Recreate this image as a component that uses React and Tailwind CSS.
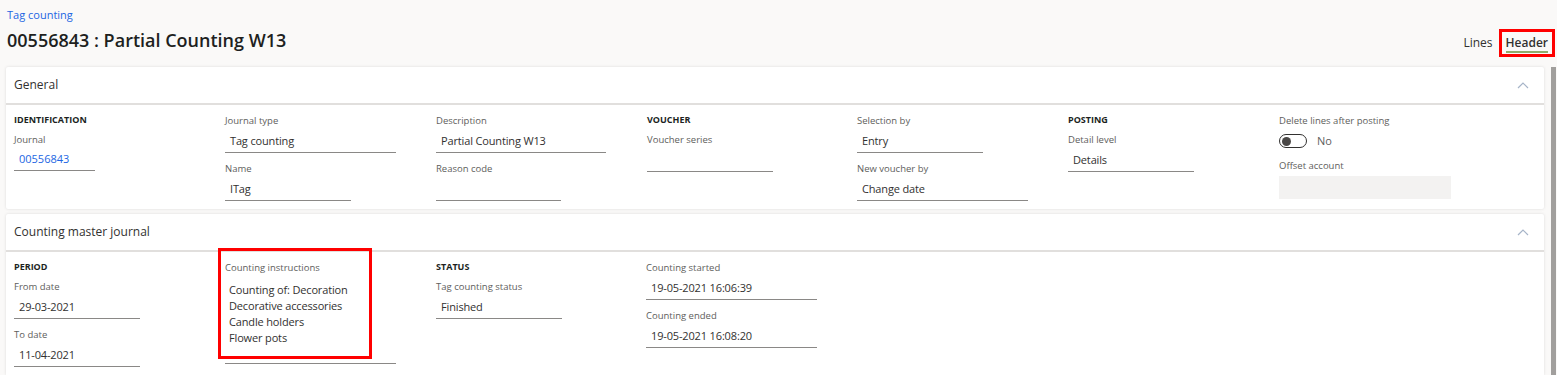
import React from 'react';

const font = { fontFamily: '"Open Sans", "Noto Sans", sans-serif' };

const Label = ({ children }) => (
  <div className="text-[9.5px] leading-[14px] text-[#605e5c]">{children}</div>
);

const Heading = ({ children }) => (
  <div className="text-[9px] leading-[14px] font-bold text-[#201f1e] mb-[6px]">{children}</div>
);

const Field = ({ label, value, width = 'w-[126px]', className = '' }) => (
  <div className={className}>
    <Label>{label}</Label>
    <div
      className={`${width} mt-[3px] h-[22px] border-b border-[#8a8886] pl-[5px] flex items-center text-[11px] tracking-[-0.15px] text-[#323130]`}
    >
      {value}
    </div>
  </div>
);

const Chevron = () => (
  <svg width="12" height="8" viewBox="0 0 12 8" fill="none">
    <path d="M1 7 L6 2 L11 7" stroke="#a6b4c8" strokeWidth="1.2" />
  </svg>
);

const Card = ({ title, children, className = '' }) => (
  <div className={`bg-white rounded-[2px] shadow-[0_0_3px_rgba(0,0,0,0.12)] ${className}`}>
    <div className="h-[38px] flex items-center justify-between pl-[8px] pr-[15px] border-b-2 border-[#e1dfdd]">
      <span className="text-[12px] text-[#323130]">{title}</span>
      <Chevron />
    </div>
    {children}
  </div>
);

export default function App() {
  return (
    <div className="w-[1557px] h-[392px] bg-white overflow-hidden" style={font}>
      <div className="h-[375px] bg-[#faf9f8] flex flex-col overflow-hidden">
        <div className="h-[67px] shrink-0 flex items-start justify-between pl-[7px] pr-[2px] pt-[7px]">
          <div>
            <div className="text-[11px] leading-[15px] text-[#2266e3]">Tag counting</div>
            <div className="text-[18px] leading-[26px] font-semibold text-[#201f1e] mt-[5px]">
              00556843 : Partial Counting W13
            </div>
          </div>
          <div className="flex items-center gap-[6px] text-[12px] text-[#323130] mt-[22px]">
            <span>Lines</span>
            <span className="border-[3px] border-[#ff0000] px-[4px] pt-[2px] pb-[1px]">
              <span className="border-b-2 border-[#8fac6b] font-semibold leading-[16px] inline-block">Header</span>
            </span>
          </div>
        </div>

        <div className="flex flex-1 min-h-0">
          <div className="ml-[6px] w-[1538px] flex flex-col gap-[5px]">
            <Card title="General" className="h-[142px] shrink-0">
              <div className="grid grid-cols-[211px_211px_211px_210px_211px_211px_1fr] pl-[8px] pt-[8px]">
                <div>
                  <Heading>IDENTIFICATION</Heading>
                  <Label>Journal</Label>
                  <div className="w-[81px] mt-[2px] h-[22px] border-b border-[#8a8886] pl-[5px] flex items-center text-[11px] text-[#2266e3]">
                    00556843
                  </div>
                </div>
                <div className="pt-[1px]">
                  <Field label="Journal type" value="Tag counting" width="w-[171px]" />
                  <Field label="Name" value="ITag" className="mt-[9px]" />
                </div>
                <div className="pt-[1px]">
                  <Field label="Description" value="Partial Counting W13" width="w-[170px]" />
                  <Field label="Reason code" value="" width="w-[125px]" className="mt-[9px]" />
                </div>
                <div>
                  <Heading>VOUCHER</Heading>
                  <Field label="Voucher series" value="" />
                </div>
                <div className="pt-[1px]">
                  <Field label="Selection by" value="Entry" />
                  <Field label="New voucher by" value="Change date" width="w-[171px]" className="mt-[9px]" />
                </div>
                <div>
                  <Heading>POSTING</Heading>
                  <Field label="Detail level" value="Details" />
                </div>
                <div className="pt-[1px]">
                  <Label>Delete lines after posting</Label>
                  <div className="flex items-center gap-[10px] mt-[4px] h-[18px]">
                    <div className="w-[28px] h-[14px] rounded-full border border-[#323130] flex items-center pl-[2px]">
                      <div className="w-[9px] h-[9px] rounded-full bg-[#4a4847]" />
                    </div>
                    <span className="text-[11px] text-[#605e5c]">No</span>
                  </div>
                  <div className="mt-[9px]">
                    <Label>Offset account</Label>
                    <div className="w-[172px] h-[23px] mt-[3px] bg-[#f3f2f1]" />
                  </div>
                </div>
              </div>
            </Card>

            <Card title="Counting master journal" className="flex-1 rounded-b-none">
              <div className="grid grid-cols-[211px_211px_210px_1fr] pl-[8px] pt-[8px]">
                <div>
                  <Heading>PERIOD</Heading>
                  <Field label="From date" value="29-03-2021" />
                  <Field label="To date" value="11-04-2021" className="mt-[9px]" />
                </div>
                <div className="pt-[1px]">
                  <div className="relative w-[171px] h-[103px] border-b border-[#8a8886]">
                    <div className="absolute left-[-7px] top-[-13px] w-[154px] h-[111px] border-[3px] border-[#ff0000]" />
                    <Label>Counting instructions</Label>
                    <div className="pl-[4px] pt-[7px] text-[11px] leading-[16px] tracking-[-0.15px] text-[#323130]">
                      <div>Counting of: Decoration</div>
                      <div>Decorative accessories</div>
                      <div>Candle holders</div>
                      <div>Flower pots</div>
                    </div>
                  </div>
                </div>
                <div>
                  <Heading>STATUS</Heading>
                  <Field label="Tag counting status" value="Finished" />
                </div>
                <div className="pt-[1px]">
                  <Field label="Counting started" value="19-05-2021 16:06:39" width="w-[171px]" />
                  <Field label="Counting ended" value="19-05-2021 16:08:20" width="w-[171px]" className="mt-[9px]" />
                </div>
              </div>
            </Card>
          </div>
          <div className="ml-[7px] w-[5px] bg-[#a19f9d]" />
        </div>
      </div>
    </div>
  );
}
